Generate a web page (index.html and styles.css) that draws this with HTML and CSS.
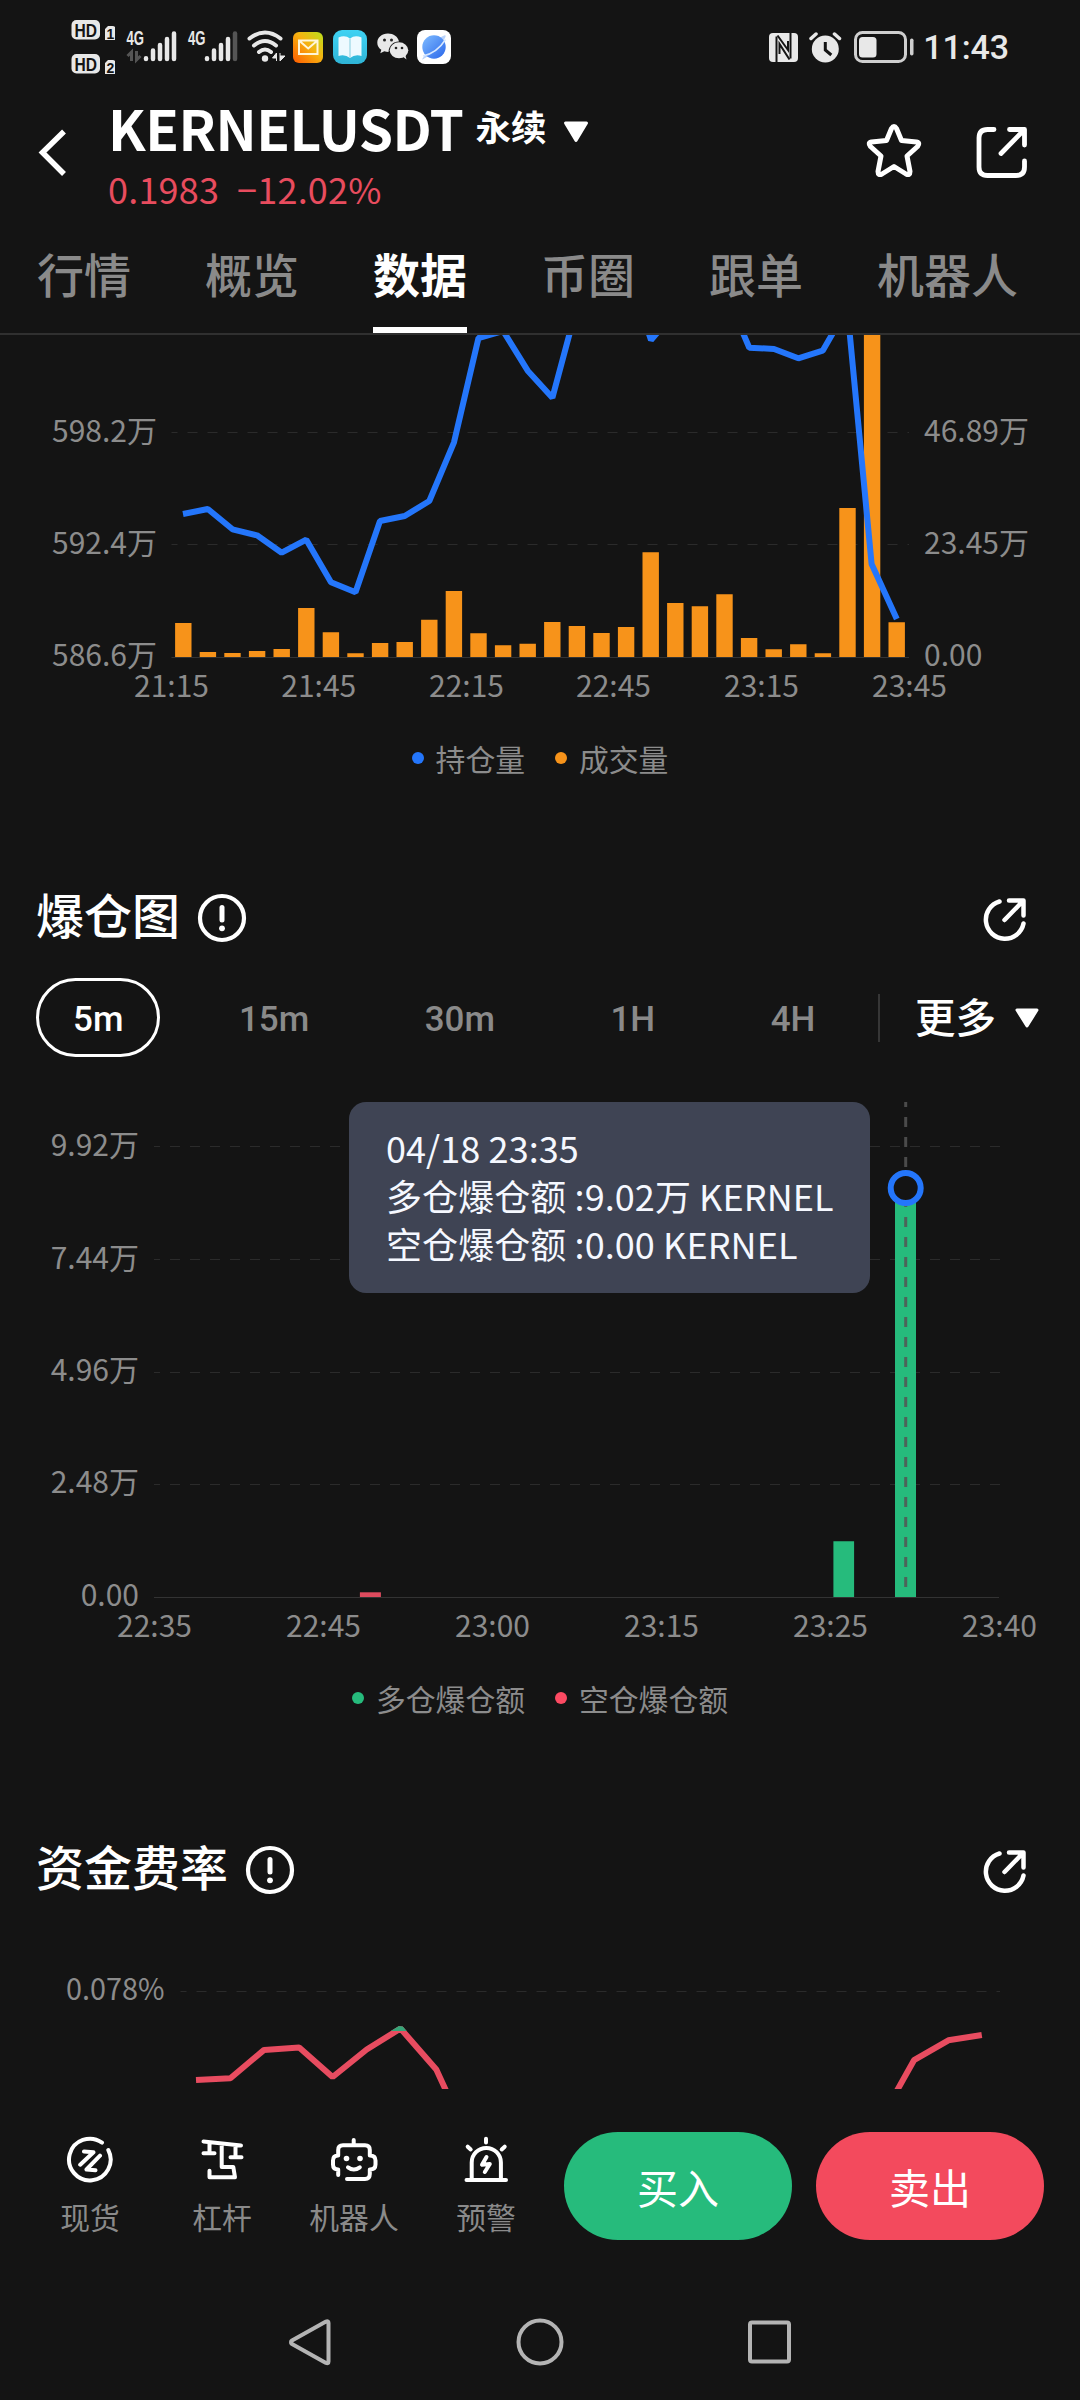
FILE: index.html
```html
<!DOCTYPE html>
<html lang="zh-CN">
<head>
<meta charset="utf-8">
<title>KERNELUSDT 永续</title>
<link rel="stylesheet" href="styles.css">
</head>
<body>
<div class="app">
  <div class="status">
    <div class="status-left">
      <svg class="sim-badges" width="44" height="56" viewBox="71 19 44 56">
        <rect x="71.5" y="20" width="28.5" height="19.5" rx="5" fill="#e8e8e8"/>
        <rect x="71.5" y="54" width="28.5" height="19.5" rx="5" fill="#e8e8e8"/>
        <path d="M105 29l3-3h4.500q3 0 3 3v11h-10.500zM105 63l3-3h4.500q3 0 3 3v11h-10.500z" fill="#e8e8e8"/>
        <g class="badge-text"><text x="74.500" y="36.500" textLength="22.500" lengthAdjust="spacingAndGlyphs">HD</text><text x="74.500" y="70.500" textLength="22.500" lengthAdjust="spacingAndGlyphs">HD</text></g>
        <g class="badge-num"><text x="106.500" y="38.500">1</text><text x="106.500" y="72.500">2</text></g>
      </svg>
      <svg class="signal" width="52" height="36" viewBox="126 28 52 36">
        <text class="net" x="126.500" y="44.700" textLength="17.500" lengthAdjust="spacingAndGlyphs">4G</text>
        <path d="M131.500 61v-9l-4 4M136.500 51v9l4-4" fill="none" stroke="#555" stroke-width="3"/>
        <path d="M146 59v-.8M153 59v-8.500M160 59V45M167 59V39M174 59V33.500" class="bars"/>
      </svg>
      <svg class="signal signal-2" width="52" height="36" viewBox="187 28 52 36">
        <text class="net" x="188" y="44.700" textLength="17.500" lengthAdjust="spacingAndGlyphs">4G</text>
        <path d="M207 59v-.8M214 59v-8.500M221 59V45M228 59V39" class="bars"/>
        <path d="M235 59V33.500" class="bars bars-off"/>
      </svg>
      <svg class="wifi" width="38" height="36" viewBox="247 28 38 36">
        <g fill="none" stroke="#e8e8e8" stroke-width="4" stroke-linecap="round">
          <path d="M249.500 38.500Q265 26.500 280.500 38.500M254 45.500Q265 36.500 276 45.500M259 52Q265 47 271 52"/>
        </g>
        <circle cx="265" cy="58.500" r="3.200" fill="#e8e8e8"/>
        <path d="M276.500 61v-8l-4 5h4M280 53v8l5-5h-5" fill="#e8e8e8" stroke="#e8e8e8"/>
      </svg>
      <svg class="mail" width="30" height="31" viewBox="0 0 30 31">
        <defs><linearGradient id="mail" x1="0" y1="1" x2="1" y2="0"><stop offset="0" stop-color="#ff5a00"/><stop offset=".55" stop-color="#f6b310"/><stop offset="1" stop-color="#b9e01c"/></linearGradient></defs>
        <rect width="30" height="31" rx="6" fill="url(#mail)"/>
        <path d="M6 8.500h18.500v13.500H6zM6 8.500l9.200 8 9.300-8" fill="none" stroke="#fff6d8" stroke-width="2"/>
      </svg>
      <svg class="book" width="34" height="34" viewBox="0 0 34 34">
        <defs><linearGradient id="book" x1="0" y1="0" x2="0" y2="1"><stop offset="0" stop-color="#3fd2f3"/><stop offset="1" stop-color="#2fb4d6"/></linearGradient></defs>
        <rect width="34" height="34" rx="9" fill="url(#book)"/>
        <path d="M5.500 7.500Q12 4.500 17 8.500Q22 4.500 28.500 7.500V26Q22 24 17 28Q12 24 5.500 26z" fill="#eefaff"/>
        <path d="M17 8.500V28" stroke="#a9ddea" stroke-width="1.500"/>
      </svg>
      <svg class="wechat" width="32" height="28" viewBox="0 0 32 28">
        <path d="M11 .5C4.800.5.3 4.500.3 9.700c0 3 1.500 5.400 4 7.100l-1 3.500 4-2q2 .6 4.200.6C12 12 17 8.200 22 8.500 21 3.500 16.500.500 11 .500z" fill="#e8e8e8"/>
        <ellipse cx="22" cy="17.300" rx="9.300" ry="8" fill="#e8e8e8"/><path d="M25 23l4.500 3.500L28 21z" fill="#e8e8e8"/>
        <g fill="#222"><circle cx="7.500" cy="7" r="1.500"/><circle cx="14.500" cy="7" r="1.500"/><circle cx="19" cy="15" r="1.300"/><circle cx="25" cy="15" r="1.300"/></g>
      </svg>
      <svg class="globe" width="34" height="34" viewBox="0 0 34 34">
        <defs><linearGradient id="globe" x1="0" y1="0" x2="1" y2="1"><stop offset="0" stop-color="#7fbcff"/><stop offset="1" stop-color="#2a66ea"/></linearGradient></defs>
        <rect width="34" height="34" rx="8" fill="#fff"/>
        <path d="M6 28Q3 31 8 28Q19 23 28 8Q30 4 26 6Q15 10 6 28z" fill="#b9d3fb"/>
        <circle cx="17" cy="17" r="11.700" fill="url(#globe)"/>
        <path d="M6 26Q20 23 28.500 9.500" fill="none" stroke="#d8e8ff" stroke-width="1.500"/>
      </svg>
    </div>
    <div class="status-right">
      <svg width="29" height="29" viewBox="0 0 29 29">
        <rect width="29" height="29" rx="4" fill="#e8e8e8"/>
        <path d="M7.500 29V3.500M21.500 0V25.500" fill="none" stroke="#141414" stroke-width="2"/>
        <path d="M8.500 2.500L19 17V8M10.500 21V11L20.500 26.500" fill="none" stroke="#141414" stroke-width="2"/>
      </svg>
      <svg class="alarm" width="33" height="31" viewBox="0 0 33 31">
        <circle cx="16.300" cy="17" r="13.500" fill="#e8e8e8"/>
        <path d="M2 6.500L7 2M30.500 6.500L25.500 2" stroke="#e8e8e8" stroke-width="3.500" stroke-linecap="round"/>
        <path d="M16.300 10v8l6 5" fill="none" stroke="#141414" stroke-width="3"/>
      </svg>
      <svg class="battery" width="60" height="32" viewBox="0 0 60 32">
        <rect x="1.500" y="1.500" width="50" height="29" rx="7" fill="none" stroke="#cfcfcf" stroke-width="3"/>
        <rect x="5" y="6" width="17.500" height="20.500" rx="3.500" fill="#e8e8e8"/>
        <rect x="56" y="7.500" width="3.500" height="17" rx="1.700" fill="#cfcfcf"/>
      </svg>
      <span class="clock">11:43</span>
    </div>
  </div>

  <header class="header">
    <svg class="back" width="32" height="50" viewBox="0 0 32 50"><path d="M27 4.500L5.500 25.500L27 47" fill="none" stroke="#fff" stroke-width="5.500"/></svg>
    <div class="pair">
      <div class="pair-name"><span class="symbol">KERNELUSDT</span><span class="kind">永续</span>
        <svg class="caret" width="26" height="22" viewBox="0 0 26 22"><path d="M2.500 2h21L13 19.500z" fill="#fff" stroke="#fff" stroke-width="3" stroke-linejoin="round"/></svg>
      </div>
      <div class="pair-price"><span>0.1983</span><span>−12.02%</span></div>
    </div>
    <svg class="star" width="58" height="58" viewBox="0 0 58 58"><path d="M26.500 6.500Q29 2.500 31.500 6.500L36.500 18.500L51.500 20Q55.500 21 52.500 24.500L42 34L45 49.500Q45 54 41 52L29 44.500L17 52Q13 54 13 49.500L16 34L5.500 24.500Q2.500 21 6.500 20L21.500 18.500z" fill="none" stroke="#fff" stroke-width="5" stroke-linejoin="round"/></svg>
    <svg class="share" width="52" height="52" viewBox="0 0 52 52"><path d="M18 3.500h-6.500q-8.500 0-8.500 8.500v29q0 8.500 8.500 8.500h28.500q8.500 0 8.500-8.500v-6M33.500 3.500h15v15.500M47.500 4.500L25 27.500" fill="none" stroke="#fff" stroke-width="4.800" stroke-linecap="round" stroke-linejoin="round"/></svg>
  </header>

  <nav class="tabs">
    <span>行情</span><span>概览</span><span class="active">数据</span><span>币圈</span><span>跟单</span><span>机器人</span>
  </nav>

  <main class="content">
    <section>
      <svg class="chart" width="1080" height="385" viewBox="0 335 1080 385">
        <g class="grid"><path d="M171.500 432.500H909M171.500 544.500H909"/></g>
        <path class="axis" d="M171.500 657.500H909"/>
        <path class="volume" d="M183.300 657v-34M207.900 657v-5M232.500 657v-4M257.100 657v-6M281.700 657v-8M306.300 657v-49M330.900 657v-24.700M355.500 657v-3.700M380.100 657v-14M404.700 657v-15M429.300 657v-37.300M453.900 657v-66M478.500 657v-23.700M503.100 657v-11.700M527.700 657v-13.300M552.300 657v-35M576.900 657v-31M601.500 657v-24M626.100 657v-30M650.700 657v-104.700M675.300 657v-54M699.900 657v-50.700M724.500 657v-62.700M749.100 657v-19M773.700 657v-7.700M798.300 657v-12.700M822.900 657v-3.700M847.500 657v-149M872.100 657v-400M896.700 657v-34.700"/>
        <polyline class="interest" points="183,514 207.800,509 232.500,529.300 257,535.300 281.700,552.700 306.300,539.700 331,582.300 355.500,592.300 380,521 404.700,516 429.300,501 454,442.300 478.500,338 503.200,331 527.700,370.700 552.400,397.700 577,306 601.500,280 626,265 651,340 675,312 700,270 725,291 749.300,347.700 774,349 798.300,358.300 822.700,350.700 847.300,308 871.600,564 896.800,619"/>
        <g class="tick"><text x="52" y="441.500">598.2万</text><text x="52" y="553.500">592.4万</text><text x="52" y="665.700">586.6万</text>
        <text x="924" y="441.500">46.89万</text><text x="924" y="553.500">23.45万</text><text x="924" y="665.700">0.00</text></g>
        <g class="tick mid"><text x="171.500" y="696.700">21:15</text><text x="318.800" y="696.700">21:45</text><text x="466.500" y="696.700">22:15</text><text x="613.500" y="696.700">22:45</text><text x="761.500" y="696.700">23:15</text><text x="909.500" y="696.700">23:45</text></g>
      </svg>
      <div class="legend"><span class="key blue">持仓量</span><span class="key orange">成交量</span></div>
    </section>

    <section>
      <div class="section-head">
        <h2>爆仓图</h2>
        <svg class="info" width="50" height="50" viewBox="0 0 50 50"><circle cx="25" cy="25" r="22" fill="none" stroke="#fff" stroke-width="4.200"/><path d="M25 14.500V27" stroke="#fff" stroke-width="5" stroke-linecap="round"/><circle cx="25" cy="35.300" r="2.900" fill="#fff"/></svg>
        <svg class="jump" width="46" height="46" viewBox="0 0 46 46"><path d="M17.500 4.500A19 19 0 1 0 41.500 26.500M27 3.500h14.500v15M40.500 4.500L22.500 23" fill="none" stroke="#fff" stroke-width="4.500" stroke-linecap="round" stroke-linejoin="round"/></svg>
      </div>
      <div class="periods">
        <span class="period active">5m</span><span class="period">15m</span><span class="period">30m</span><span class="period">1H</span><span class="period">4H</span>
        <i class="divider"></i>
        <span class="more">更多</span>
        <svg width="24" height="20" viewBox="0 0 24 20"><path d="M2 2h20L12 18z" fill="#fff" stroke="#fff" stroke-width="3" stroke-linejoin="round"/></svg>
      </div>
      <div class="plot">
        <svg class="chart" width="1080" height="575" viewBox="0 1085 1080 575">
          <g class="grid"><path d="M154 1146.500H1000M154 1259.500H1000M154 1372.500H1000M154 1484.500H1000"/></g>
          <path class="axis" d="M154 1597.500H999"/>
          <path d="M359.900 1592.300h21v4.700h-21z" fill="#de4b5e"/>
          <path d="M833.400 1541.300h20.700v55.700h-20.700zM895 1188h21v409h-21z" fill="#26bb7c"/>
          <path d="M905.700 1102V1597" stroke="#555" stroke-opacity=".85" stroke-width="3" stroke-dasharray="10 10" stroke-dashoffset="5"/>
          <circle cx="905.700" cy="1188" r="15" fill="#141414" stroke="#2476fb" stroke-width="6"/>
          <g class="tick end"><text x="139" y="1156">9.92万</text><text x="139" y="1268.500">7.44万</text><text x="139" y="1381">4.96万</text><text x="139" y="1492.700">2.48万</text><text x="139" y="1605.700">0.00</text></g>
          <g class="tick mid"><text x="154.500" y="1636.700">22:35</text><text x="323.500" y="1636.700">22:45</text><text x="492.500" y="1636.700">23:00</text><text x="661.500" y="1636.700">23:15</text><text x="830.500" y="1636.700">23:25</text><text x="999.500" y="1636.700">23:40</text></g>
        </svg>
        <div class="tooltip"><div>04/18 23:35</div><div>多仓爆仓额 :9.02万 KERNEL</div><div>空仓爆仓额 :0.00 KERNEL</div></div>
      </div>
      <div class="legend"><span class="key green">多仓爆仓额</span><span class="key red">空仓爆仓额</span></div>
    </section>

    <section>
      <div class="section-head section-head-rate">
        <h2>资金费率</h2>
        <svg class="info" width="50" height="50" viewBox="0 0 50 50"><circle cx="25" cy="25" r="22" fill="none" stroke="#fff" stroke-width="4.200"/><path d="M25 14.500V27" stroke="#fff" stroke-width="5" stroke-linecap="round"/><circle cx="25" cy="35.300" r="2.900" fill="#fff"/></svg>
        <svg class="jump" width="46" height="46" viewBox="0 0 46 46"><path d="M17.500 4.500A19 19 0 1 0 41.500 26.500M27 3.500h14.500v15M40.500 4.500L22.500 23" fill="none" stroke="#fff" stroke-width="4.500" stroke-linecap="round" stroke-linejoin="round"/></svg>
      </div>
      <svg class="chart chart-rate" width="1080" height="139" viewBox="0 1950 1080 139">
        <defs><clipPath id="above"><path d="M380 2000h40v31h-40z"/></clipPath></defs>
        <g class="grid"><path d="M180.500 1991.500H1000"/></g>
        <g class="rate">
          <path d="M196 2080L230.400 2078.200L264.100 2049.900L299.200 2047.600L332.600 2077L366.700 2049.500L400.500 2028.500L436.300 2069.400L470 2143M880 2121L914 2060.200L948.400 2040.300L981.800 2035"/>
          <path class="up" clip-path="url(#above)" d="M366.700 2049.500L400.500 2028.500L436.300 2069.400"/>
        </g>
        <g class="tick"><text x="66" y="1999.800" textLength="98.500" lengthAdjust="spacingAndGlyphs">0.078%</text></g>
      </svg>
    </section>
  </main>

  <footer class="actions">
    <div class="action"><svg class="line-icon" width="48" height="48" viewBox="0 0 48 48"><path d="M36 6.700A20.800 20.800 0 1 0 42.300 14M18 15.500l9.500.8L14.200 28.700M34 19.700L20.500 33.500l9 .8"/></svg><span>现货</span></div>
    <div class="action"><svg class="line-icon" width="48" height="48" viewBox="0 0 48 48"><path d="M5.500 5.500L43 9.500M11.500 6.500v10.800M5.500 17.300h11M37.500 9v12.300M32.500 21.300h11M23.700 8v23h11.600l1.700 10.300H11.500v-6.500"/></svg><span>杠杆</span></div>
    <div class="action"><svg class="line-icon" width="48" height="48" viewBox="0 0 48 48"><path d="M23.700 4v5.300M17 43h18q4.800 0 4.800-5v-4.500q5.700 0 5.700-5v-4q0-5-5.700-5v-5.500q0-4.700-4.800-4.700h-22q-4.800 0-4.800 4.700v5.500q-5.200 0-5.200 5v4q0 5 5.200 5v5.500M18 31.300q5.800 4.500 11.800 0"/><circle class="dot" cx="16.500" cy="22.500" r="2.800"/><circle class="dot" cx="30" cy="22.500" r="2.800"/></svg><span>机器人</span></div>
    <div class="action"><svg class="line-icon" width="48" height="48" viewBox="0 0 48 48"><path d="M4.500 44h39.500M9.700 44V26.500a14.600 14.600 0 0 1 29.200 0V44M24 2.800v3.700M5.700 10.700l3 2.800M42.700 10.700l-3 2.800M24.500 21l-4.500 7.800 7.800-.8-5 8"/></svg><span>预警</span></div>
    <div class="trade buy">买入</div>
    <div class="trade sell">卖出</div>
  </footer>

  <div class="sysnav">
    <svg width="50" height="50" viewBox="0 0 50 50"><path d="M6.300 25.300Q5.500 24.500 7 23.500L41 4.500Q43.500 3.500 43.500 6V44.500Q43.500 47 41 46L7 27Q5.500 26 6.300 25.300z"/></svg>
    <svg width="50" height="50" viewBox="0 0 50 50"><circle cx="25" cy="25" r="21.500"/></svg>
    <svg width="50" height="50" viewBox="0 0 50 50"><rect x="5" y="5.500" width="39" height="39" rx="2"/></svg>
  </div>
</div>
</body>
</html>
```

FILE: styles.css
```css
* { box-sizing: border-box; }

body {
  margin: 0;
  background: #141414;
  color: #fff;
  font-family: "Noto Sans CJK SC", sans-serif;
}

svg { display: block; flex: none; }

.app {
  display: flex;
  flex-direction: column;
  width: 1080px;
  height: 2400px;
  overflow: hidden;
}

/* System status bar */
.status {
  display: flex;
  justify-content: space-between;
  height: 94px;
  padding: 0 71px;
  flex: none;
}
.status-left, .status-right { display: flex; align-items: center; height: 94px; }
.signal { margin-left: 11px; margin-bottom: 2px; }
.signal-2 { margin-left: 9px; }
.wifi { margin-left: 8px; margin-bottom: 2px; }
.mail { margin-left: 8px; }
.book { margin-left: 10px; }
.wechat { margin-left: 10px; }
.globe { margin-left: 8px; }
.badge-text { font: 700 19px "Liberation Sans", sans-serif; fill: #141414; }
.badge-num { font: 700 14px "Liberation Sans", sans-serif; fill: #141414; }
.net { font: 700 20px "Liberation Sans", sans-serif; fill: #e8e8e8; }
.bars { stroke: #e8e8e8; stroke-width: 4.5; stroke-linecap: round; fill: none; }
.bars-off { stroke: #555; }
.alarm { margin-left: 11px; }
.battery { margin-left: 12px; }
.clock {
  margin-left: 9px;
  font: 500 34px/94px Roboto, sans-serif;
  letter-spacing: -0.1px;
  color: #e8e8e8;
}

/* Pair header */
.header {
  display: flex;
  height: 120px;
  padding-right: 52px;
  flex: none;
}
.back { margin: 33px 0 0 37px; }
.pair { flex: 1; padding: 2px 0 0 38px; }
.pair-name { display: flex; align-items: center; height: 60px; padding-left: 1px; }
.symbol { font-size: 55px; font-weight: 700; line-height: 60px; letter-spacing: -0.5px; margin-top: 1px; }
.kind { margin-left: 12px; font-size: 35.5px; font-weight: 700; line-height: 58px; padding-bottom: 1px; }
.caret { margin: 11px 0 0 16px; }
.pair-price {
  display: flex;
  gap: 18px;
  margin-top: 10px;
  padding-left: 1px;
  font-size: 36px;
  letter-spacing: 0.2px;
  line-height: 44px;
  color: #e84c5e;
}
.star { margin: 28px 53px 0 0; }
.share { margin-top: 32px; }

/* Page tabs */
.tabs {
  display: flex;
  gap: 74px;
  height: 121px;
  padding-left: 37px;
  border-bottom: 2px solid #303030;
  flex: none;
}
.tabs span {
  height: 119px;
  font-size: 47px;
  font-weight: 500;
  line-height: 118px;
  color: #8a8a8a;
}
.tabs .active {
  color: #fff;
  font-weight: 700;
  box-shadow: inset 0 -6px #fff;
}

/* Scrolling area */
.content { height: 1754px; overflow: hidden; flex: none; }
.tick { font-size: 30px; fill: #8c8c8c; }
.mid { text-anchor: middle; }
.end { text-anchor: end; }
.grid { stroke: #2b2b2b; stroke-width: 1; stroke-dasharray: 10 10; stroke-dashoffset: 4; }
.axis { stroke: #333; stroke-width: 1; }
.volume { stroke: #f7931a; stroke-width: 16.4; }
.interest { fill: none; stroke: #2476fb; stroke-width: 6; stroke-linejoin: bevel; }
.rate { fill: none; stroke: #e84c60; stroke-width: 6; stroke-linejoin: bevel; }
.rate .up { stroke: #35a578; }
.legend {
  display: flex;
  justify-content: center;
  gap: 30px;
  height: 76px;
  font-size: 29.8px;
  line-height: 76px;
  color: #8c8c8c;
}
.key { display: flex; align-items: center; gap: 12px; }
.key::before { content: ""; width: 12px; height: 12px; border-radius: 50%; background: currentColor; }
.blue::before { background: #2476fb; }
.orange::before { background: #f7931a; }
.green::before { background: #26bb7c; }
.red::before { background: #fc4a62; }

.section-head {
  display: flex;
  align-items: center;
  height: 72px;
  margin-top: 86px;
  padding: 0 52px 0 36px;
}
.section-head-rate { margin-top: 98px; }
.section-head h2 {
  margin: 0;
  font-size: 48px;
  font-weight: 500;
  line-height: 62px;
  padding-bottom: 10px;
}
.info { margin-left: 17px; }
.jump { margin-left: auto; position: relative; top: 2px; }
.periods {
  display: flex;
  align-items: center;
  height: 79px;
  margin: 24px 0 28px;
  padding-left: 36px;
}
.period {
  height: 79px;
  padding: 1px 34px 0;
  border: 3px solid transparent;
  border-radius: 40px;
  margin-right: 41.5px;
  font: 500 35px/75px Roboto, sans-serif;
  color: #8a8a8a;
}
.period.active { border-color: #fff; color: #fff; }
.divider { width: 2px; height: 48px; background: #363636; margin-left: -16px; }
.more { margin-left: 35px; font-size: 40.5px; font-weight: 500; line-height: 74px; padding-bottom: 3px; }
.more + svg { margin-left: 19px; }
.plot { position: relative; }
.tooltip {
  position: absolute;
  left: 349px;
  top: 17px;
  width: 521px;
  height: 191px;
  padding: 21px 0 0 37px;
  border-radius: 17px;
  background: #3f4454;
  color: #f5f8ff;
  font-size: 36px;
  letter-spacing: 0.08px;
  line-height: 48px;
  white-space: nowrap;
}
.chart-rate { margin-top: 44px; }

/* Trading actions */
.actions {
  display: flex;
  align-items: flex-start;
  height: 194px;
  padding-left: 24px;
  flex: none;
}
.action {
  display: flex;
  flex-direction: column;
  align-items: center;
  width: 132px;
  padding-top: 47px;
  font-size: 29.8px;
  line-height: 40px;
  color: #8a8a8a;
}
.action span { margin-top: 12px; }
.line-icon { fill: none; stroke: #fff; stroke-width: 4; stroke-linecap: round; stroke-linejoin: round; }
.line-icon .dot { fill: #fff; stroke: none; }
.trade {
  width: 228px;
  height: 108px;
  margin-top: 43px;
  border-radius: 54px;
  font-size: 41px;
  font-weight: 400;
  line-height: 108px;
  text-align: center;
}
.buy { margin-left: 12px; background: #26bb7c; }
.sell { margin-left: 24px; background: #f34a5d; }

/* System navigation */
.sysnav {
  display: flex;
  justify-content: center;
  gap: 180px;
  padding-top: 34px;
}
.sysnav svg { fill: none; stroke: #b4b4b4; stroke-width: 4; stroke-linejoin: round; }
```
